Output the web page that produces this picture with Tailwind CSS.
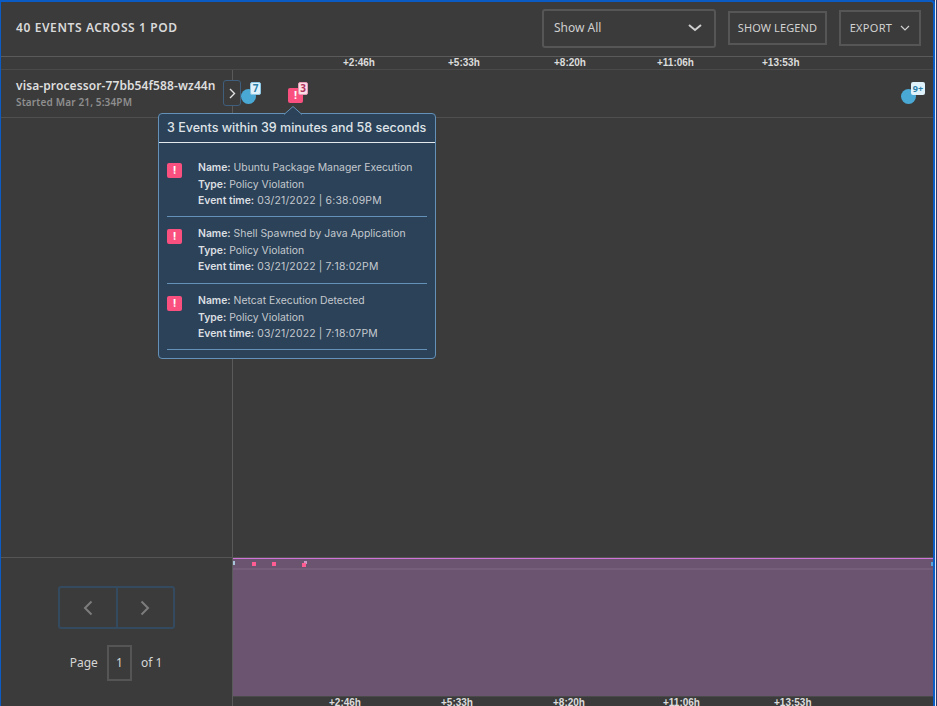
<!DOCTYPE html>
<html lang="en">
<head>
<meta charset="UTF-8">
<meta name="viewport" content="width=device-width, initial-scale=1.0">
<title>events</title>
<script src="https://cdn.jsdelivr.net/npm/@tailwindcss/browser@4"></script>
</head>
<body class="bg-[#2c3a6b]">
<div class="flex w-[937px] h-[706px] overflow-hidden">
<div class="relative w-[935px] h-[706px] shrink-0 overflow-hidden flex flex-col bg-[#3b3b3b] border-t-2 border-l border-r-2 border-[#0a5bc4] rounded-tr-[4px] font-['Noto_Sans',sans-serif] text-[#d6d6d6]">

  <!-- header -->
  <div class="h-[54px] flex items-center shrink-0 pl-[15px] pr-[12px] pb-[2px]">
    <p class="text-[12px] font-semibold tracking-[0.6px] text-[#d9d9d9]">40 EVENTS ACROSS 1 POD</p>
    <div class="ml-auto w-[174px] h-[39px] mr-[12px] flex items-center justify-between pl-[10px] pr-[12px] border-2 border-[#565656] rounded-[3px] text-[12px] text-[#cfcfcf]">
      <span>Show All</span>
      <svg width="14" height="8" viewBox="0 0 14 8" fill="none" stroke="#cfcfcf" stroke-width="2"><path d="M1 1l6 5 6-5"/></svg>
    </div>
    <div class="w-[99px] h-[34px] mr-[12px] flex items-center justify-center border-2 border-[#565656] text-[11px] tracking-[0.1px] text-[#d2d2d2]">SHOW LEGEND</div>
    <div class="w-[82px] h-[36px] flex items-center justify-center gap-[8px] border-2 border-[#565656] text-[11px] tracking-[0.3px] text-[#d2d2d2]">
      <span>EXPORT</span>
      <svg width="10" height="6" viewBox="0 0 10 6" fill="none" stroke="#cfcfcf" stroke-width="1.2"><path d="M1 1l4 4 4-4"/></svg>
    </div>
  </div>

  <!-- top axis -->
  <div class="relative h-[14px] shrink-0 border-t border-[#5a5a5a] border-b border-b-[#4a4a4a] font-['Liberation_Sans',sans-serif] font-bold text-[10px] leading-[11px] text-[#dcdcdc]">
    <span class="absolute left-[342px] top-0">+2:46h</span>
    <span class="absolute left-[447px] top-0">+5:33h</span>
    <span class="absolute left-[553px] top-0">+8:20h</span>
    <span class="absolute left-[656px] top-0">+11:06h</span>
    <span class="absolute left-[761px] top-0">+13:53h</span>
  </div>

  <!-- middle -->
  <div class="flex-1 flex min-h-0">
    <div class="w-[231px] shrink-0">
      <div class="h-[48px] border-b border-[#4f4f4f] pl-[15px] pt-[7px]">
        <p class="text-[12px] leading-[18px] font-semibold tracking-[0.1px] text-[#dedede] whitespace-nowrap">visa-processor-77bb54f588-wz44n</p>
        <p class="text-[10px] leading-[14px] font-semibold tracking-[0.15px] text-[#8f8f8f] whitespace-nowrap">Started Mar 21, 5:34PM</p>
      </div>
    </div>
    <div class="flex-1 border-l border-[#5a5a5a]">
      <div class="h-[48px] border-b border-[#4f4f4f]"></div>
    </div>
  </div>

  <!-- bottom -->
  <div class="h-[149px] shrink-0 flex border-t border-[#555555]">
    <div class="w-[231px] shrink-0 flex flex-col items-center pr-[1px]">
      <div class="mt-[28px] w-[117px] h-[43px] flex border-2 border-[#344a5e] rounded-[3px]">
        <div class="w-[58px] flex items-center justify-center border-r-2 border-[#344a5e]">
          <svg width="10" height="16" viewBox="0 0 10 16" fill="none" stroke="#7c7c7c" stroke-width="2"><path d="M8.5 1.5L2 8l6.5 6.5"/></svg>
        </div>
        <div class="flex-1 flex items-center justify-center">
          <svg width="10" height="16" viewBox="0 0 10 16" fill="none" stroke="#7c7c7c" stroke-width="2"><path d="M1.5 1.5L8 8l-6.5 6.5"/></svg>
        </div>
      </div>
      <div class="mt-[16px] flex items-center text-[12px] text-[#d6d6d6]">
        <span>Page</span>
        <span class="w-[25px] h-[36px] mx-[9px] flex items-center justify-center border-2 border-[#555555]">1</span>
        <span>of 1</span>
      </div>
    </div>
    <div class="flex-1 flex flex-col border-l border-[#5a5a5a]">
      <div class="relative flex-1 bg-[#6b5470] border-t border-[#cf74d6]">
        <div class="h-[11px] border-b-2 border-[#755e79]"></div>
        <span class="absolute left-0 top-[2px] w-[2px] h-[4px] bg-[#a8c4d8]"></span>
        <span class="absolute left-[19px] top-[3px] w-[4px] h-[4px] bg-[#ff5c93]"></span>
        <span class="absolute left-[39px] top-[3px] w-[4px] h-[4px] bg-[#ff5c93]"></span>
        <span class="absolute left-[71px] top-[2px] w-[3px] h-[3px] bg-[#c99ac4]"></span>
        <span class="absolute left-[69px] top-[4px] w-[4px] h-[4px] bg-[#ff5c93]"></span>
        <span class="absolute right-0 top-[3px] w-[2px] h-[4px] bg-[#5aa5d6]"></span>
      </div>
      <div class="relative h-[10px] shrink-0 border-t border-[#4a4a4a] font-['Liberation_Sans',sans-serif] font-bold text-[10px] leading-[11px] text-[#dcdcdc]">
        <span class="absolute left-[96px] top-0">+2:46h</span>
        <span class="absolute left-[208px] top-0">+5:33h</span>
        <span class="absolute left-[320px] top-0">+8:20h</span>
        <span class="absolute left-[430px] top-0">+11:06h</span>
        <span class="absolute left-[541px] top-0">+13:53h</span>
      </div>
    </div>
  </div>

  <!-- expand toggle on the row -->
  <div class="absolute left-[222px] top-[78px] w-[18px] h-[26px] flex items-center justify-center bg-[#3b3b3b] border border-[#3f5f7c] rounded-[3px]">
    <svg width="7" height="11" viewBox="0 0 7 11" fill="none" stroke="#e0e0e0" stroke-width="1.4"><path d="M1 1l4.5 4.5L1 10"/></svg>
  </div>

  <!-- timeline markers -->
  <div class="absolute left-[240px] top-[87px] w-[15px] h-[15px] rounded-full bg-[#4aa8d4]"></div>
  <div class="absolute left-[249px] top-[80px] w-[11px] h-[13px] flex items-center justify-center rounded-[2px] bg-[#dff1fa] border border-[#8cc6e2] text-[10px] font-bold text-[#2b7ea8]">7</div>

  <div class="absolute left-[287px] top-[86px] w-[15px] h-[15px] flex items-center justify-center rounded-[2px] bg-[#f9507f] text-[11px] font-bold text-white">!</div>
  <div class="absolute left-[297px] top-[80px] w-[10px] h-[13px] flex items-center justify-center rounded-[2px] bg-[#fbdde6] border border-[#e79ab3] text-[10px] font-bold text-[#b0305a]">3</div>

  <div class="absolute left-[900px] top-[87px] w-[15px] h-[15px] rounded-full bg-[#4aa8d4]"></div>
  <div class="absolute left-[910px] top-[80px] w-[14px] h-[13px] flex items-center justify-center rounded-[2px] bg-[#dff1fa] text-[9px] font-bold text-[#2b7ea8]">9+</div>

  <!-- tooltip -->
  <div class="absolute left-[157px] top-[111px] w-[278px] h-[246px] bg-[#2b4259] border border-[#6391b8] rounded-[4px] font-['Inter',sans-serif] text-[#c5c9ce]">
    <svg class="absolute left-[125px] -top-[8px]" width="18" height="9" viewBox="0 0 18 9"><path d="M0 8.5L9 .5l9 8" fill="#2b4259" stroke="#6391b8"/></svg>
    <div class="h-[29px] pl-[8px] flex items-center border-b border-[#e4e9ee] text-[12.5px] font-medium text-[#dfe3e7] whitespace-nowrap">3 Events within 39 minutes and 58 seconds</div>
    <div class="px-[8px] pt-[8px] text-[10.4px] leading-[16.5px]">
      <div class="flex h-[66px] border-b border-[#6391b8] pt-[9px]">
        <span class="w-[15px] h-[15px] mt-[3px] flex items-center justify-center rounded-[2px] bg-[#f9507f] text-[11px] font-bold text-white">!</span>
        <div class="ml-[16px] whitespace-nowrap"><p><b class="font-semibold text-[#dcdfe2]">Name:</b> Ubuntu Package Manager Execution</p><p><b class="font-semibold text-[#dcdfe2]">Type:</b> Policy Violation</p><p><b class="font-semibold text-[#dcdfe2]">Event time:</b> <span class="tracking-[0.2px]">03/21/2022 | 6:38:09PM</span></p></div>
      </div>
      <div class="flex h-[67px] border-b border-[#6391b8] pt-[9px]">
        <span class="w-[15px] h-[15px] mt-[3px] flex items-center justify-center rounded-[2px] bg-[#f9507f] text-[11px] font-bold text-white">!</span>
        <div class="ml-[16px] whitespace-nowrap"><p><b class="font-semibold text-[#dcdfe2]">Name:</b> Shell Spawned by Java Application</p><p><b class="font-semibold text-[#dcdfe2]">Type:</b> Policy Violation</p><p><b class="font-semibold text-[#dcdfe2]">Event time:</b> <span class="tracking-[0.2px]">03/21/2022 | 7:18:02PM</span></p></div>
      </div>
      <div class="flex h-[66px] border-b border-[#6391b8] pt-[9px]">
        <span class="w-[15px] h-[15px] mt-[3px] flex items-center justify-center rounded-[2px] bg-[#f9507f] text-[11px] font-bold text-white">!</span>
        <div class="ml-[16px] whitespace-nowrap"><p><b class="font-semibold text-[#dcdfe2]">Name:</b> Netcat Execution Detected</p><p><b class="font-semibold text-[#dcdfe2]">Type:</b> Policy Violation</p><p><b class="font-semibold text-[#dcdfe2]">Event time:</b> <span class="tracking-[0.2px]">03/21/2022 | 7:18:07PM</span></p></div>
      </div>
    </div>
  </div>
</div>
<div class="w-[1px] h-[706px] bg-[#e8ecf2]"></div>
</div>
</body>
</html>
